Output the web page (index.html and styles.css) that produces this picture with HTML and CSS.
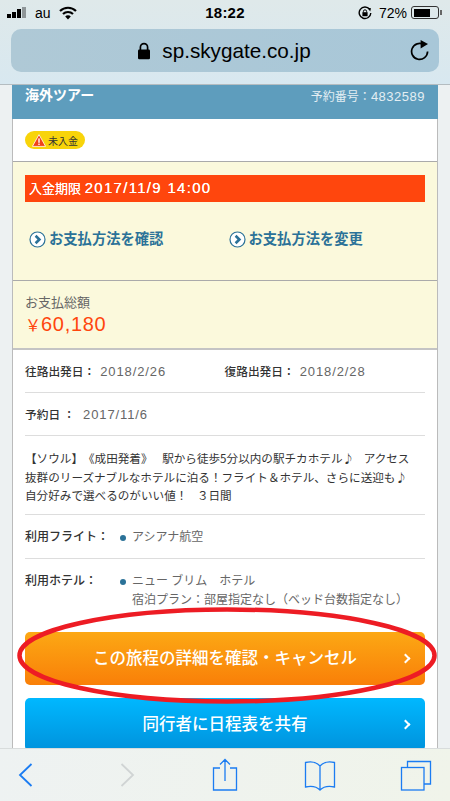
FILE: index.html
```html
<!DOCTYPE html>
<html lang="ja">
<head>
    <meta charset="UTF-8">
    <meta name="viewport" content="width=device-width, initial-scale=1.0">
    <title>sp.skygate.co.jp</title>
    <link rel="stylesheet" href="styles.css">
</head>
<body>
    <div class="phone">
        <header class="chrome">
            <div class="status-bar">
                <div class="status-left">
                    <span class="signal"><i></i><i></i><i></i><i></i></span>
                    <span class="carrier">au</span>
                    <svg class="wifi" width="18" height="14" viewBox="0 0 18 14">
                        <path d="M1 5 A11.5 11.5 0 0 1 17 5" fill="none" stroke="#000" stroke-width="2.2"/>
                        <path d="M4 8 A7.2 7.2 0 0 1 14 8" fill="none" stroke="#000" stroke-width="2.2"/>
                        <path d="M6.2 10.6 A3.8 3.8 0 0 1 11.8 10.6 L9 13.6 Z" fill="#000"/>
                    </svg>
                </div>
                <div class="clock">18:22</div>
                <div class="status-right">
                    <svg class="lock-rotate" width="14" height="14" viewBox="0 0 14 14">
                        <path d="M11.6 3.2 A5.8 5.8 0 1 0 12.8 7" fill="none" stroke="#000" stroke-width="1.4"/>
                        <path d="M9.6 1.8 L13 2.2 L12.2 5.4 Z" fill="#000"/>
                        <rect x="4.4" y="6.2" width="5.2" height="4" fill="#000"/>
                        <path d="M5.4 6.4 V5.4 A1.6 1.6 0 0 1 8.6 5.4 V6.4" fill="none" stroke="#000" stroke-width="1"/>
                    </svg>
                    <span class="battery-pct">72%</span>
                    <span class="battery"><span class="battery-fill"></span></span>
                    <span class="battery-cap"></span>
                </div>
            </div>
            <div class="url-bar">
                <svg class="padlock" width="14" height="18" viewBox="0 0 14 18">
                    <path d="M3.4 8 V5.2 A3.6 3.6 0 0 1 10.6 5.2 V8" fill="none" stroke="#000" stroke-width="1.7"/>
                    <rect x="1" y="7.6" width="12" height="9.6" rx="1.2" fill="#000"/>
                </svg>
                <span class="url">sp.skygate.co.jp</span>
                <svg class="reload" width="20" height="22" viewBox="0 0 20 22">
                    <path d="M14.4 5.6 A8 8 0 1 0 18.2 12.6" transform="translate(-0.6 0)" fill="none" stroke="#000" stroke-width="1.7"/>
                    <path d="M10.6 1 L18 5 L10.6 9.4 Z" fill="#000"/>
                </svg>
            </div>
        </header>

        <main class="page">
            <div class="card">
                <div class="card-head">
                    <span class="tour-type">海外ツアー</span>
                    <span class="booking-no">予約番号：<span class="booking-num">4832589</span></span>
                </div>
                <div class="badge-row">
                    <span class="badge">
                        <svg width="14" height="13" viewBox="0 0 14 13">
                            <path d="M7 .6 L13.6 12.4 H.4 Z" fill="#f0421a" stroke="#fff" stroke-width=".8"/>
                            <rect x="6.3" y="4.4" width="1.4" height="4.4" fill="#fff"/>
                            <rect x="6.3" y="9.6" width="1.4" height="1.4" fill="#fff"/>
                        </svg>
                        未入金
                    </span>
                </div>
                <section class="pay-box">
                    <div class="deadline">入金期限 <span class="deadline-time">2017/11/9 14:00</span></div>
                    <div class="pay-links">
                        <a class="pay-link">
                            <svg width="17" height="17" viewBox="0 0 17 17">
                                <circle cx="8.5" cy="8.5" r="7.5" fill="#fff" stroke="#2b7298" stroke-width="1.2"/>
                                <path d="M6.6 4.8 L10.4 8.5 L6.6 12.2" fill="none" stroke="#2b7298" stroke-width="2.6"/>
                            </svg>
                            お支払方法を確認
                        </a>
                        <a class="pay-link">
                            <svg width="17" height="17" viewBox="0 0 17 17">
                                <circle cx="8.5" cy="8.5" r="7.5" fill="#fff" stroke="#2b7298" stroke-width="1.2"/>
                                <path d="M6.6 4.8 L10.4 8.5 L6.6 12.2" fill="none" stroke="#2b7298" stroke-width="2.6"/>
                            </svg>
                            お支払方法を変更
                        </a>
                    </div>
                </section>
                <section class="total-box">
                    <div class="total-label">お支払総額</div>
                    <div class="total-price"><span class="yen">￥</span>60,180</div>
                </section>
                <section class="details">
                    <div class="row row-dates">
                        <div><b>往路出発日：</b><span class="val">2018/2/26</span></div>
                        <div><b>復路出発日：</b><span class="val">2018/2/28</span></div>
                    </div>
                    <div class="row row-booked"><b>予約日 ：</b><span class="val">2017/11/6</span></div>
                    <p class="row tour-name">【ソウル】《成田発着》 駅から徒歩5分以内の駅チカホテル♪ アクセス抜群のリーズナブルなホテルに泊る！フライト＆ホテル、さらに送迎も♪ 自分好みで選べるのがいい値！ ３日間</p>
                    <div class="row row-info">
                        <b class="info-label">利用フライト：</b>
                        <ul class="info-list"><li>アシアナ航空</li></ul>
                    </div>
                    <div class="row row-info row-hotel">
                        <b class="info-label">利用ホテル：</b>
                        <ul class="info-list"><li>ニュー ブリム　ホテル<br>宿泊プラン：部屋指定なし（ベッド台数指定なし）</li></ul>
                    </div>
                    <a class="btn btn-orange">この旅程の詳細を確認・キャンセル<span class="chev"></span></a>
                    <a class="btn btn-blue">同行者に日程表を共有<span class="chev"></span></a>
                </section>
            </div>
            <svg class="annotation" width="450" height="104" viewBox="0 0 450 104">
                <ellipse cx="227" cy="52.500" rx="207.500" ry="46" fill="none" stroke="#ed1c24" stroke-width="4.500"/>
            </svg>
        </main>

        <footer class="toolbar">
            <svg width="32" height="34" viewBox="0 0 32 34"><path d="M21.500 6 L10 17 L21.500 28" fill="none" stroke="#1b7cf2" stroke-width="1.800"/></svg>
            <svg width="32" height="34" viewBox="0 0 32 34"><path d="M10.500 6 L22 17 L10.500 28" fill="none" stroke="#d0d4d4" stroke-width="1.800"/></svg>
            <svg width="32" height="34" viewBox="0 0 32 34">
                <path d="M11 10 H4.500 V32 H27.500 V10 H21 M16 23 V2 M11 6.500 L16 1.500 L21 6.500" fill="none" stroke="#1b7cf2" stroke-width="1.300"/>
            </svg>
            <svg width="32" height="34" viewBox="0 0 32 34">
                <path d="M16 8 C12 3.500 6 3.500 1.500 4.500 V29 C6 28 12 28 16 32 C20 28 26 28 30.500 29 V4.500 C26 3.500 20 3.500 16 8 Z M16 8 V32" fill="none" stroke="#1b7cf2" stroke-width="1.300"/>
            </svg>
            <svg width="32" height="34" viewBox="0 0 32 34">
                <path d="M7.500 9 V3.500 H30.500 V26 H24" fill="none" stroke="#1b7cf2" stroke-width="1.300"/>
                <rect x="1.500" y="9.500" width="22.500" height="22.500" fill="none" stroke="#1b7cf2" stroke-width="1.300"/>
            </svg>
        </footer>
    </div>
</body>
</html>
```

FILE: styles.css
```css
* {
    box-sizing: border-box;
}
body {
    margin: 0;
    font-family: "Liberation Sans", "Noto Sans CJK JP", sans-serif;
    color: #333;
}
.phone {
    display: flex;
    flex-direction: column;
    width: 450px;
    height: 801px;
    overflow: hidden;
    background: #edf1f2;
}

/* browser chrome */
.chrome {
    flex: none;
    height: 85px;
    padding: 0 11px;
    background: linear-gradient(#dfe9ea, #d8e8f0);
    border-bottom: 1px solid #b4bcc0;
}
.status-bar {
    display: flex;
    align-items: center;
    justify-content: space-between;
    height: 25px;
    margin: 0 -4px;
    color: #000;
}
.status-left,
.status-right {
    display: flex;
    align-items: center;
    width: 145px;
}
.status-right {
    justify-content: flex-end;
}
.signal {
    display: flex;
    align-items: flex-end;
    gap: 1px;
    height: 11px;
}
.signal i {
    width: 4px;
    background: #000;
}
.signal i:nth-child(1) { height: 4px; }
.signal i:nth-child(2) { height: 6px; }
.signal i:nth-child(3) { height: 9px; }
.signal i:nth-child(4) { height: 11px; background: #8f9698; }
.carrier {
    margin-left: 9px;
    font-size: 14px;
}
.wifi {
    margin-left: 8px;
}
.clock {
    font-size: 15px;
    font-weight: bold;
    letter-spacing: 0.2px;
}
.lock-rotate {
    margin-right: 7px;
}
.battery-pct {
    margin-right: 4px;
    font-size: 14px;
}
.battery {
    width: 28px;
    height: 13px;
    padding: 1.500px;
    border: 1px solid #333;
    border-radius: 3px;
}
.battery-fill {
    display: block;
    width: 72%;
    height: 100%;
    background: #000;
}
.battery-cap {
    width: 2px;
    height: 5px;
    margin: 0 1px 0 1px;
    background: #666;
}
.url-bar {
    position: relative;
    display: flex;
    align-items: center;
    justify-content: center;
    gap: 11px;
    height: 43px;
    margin-top: 4px;
    padding-right: 2px;
    background: linear-gradient(90deg, #afc9d6, #a8c7d8);
    border-radius: 10px;
    color: #000;
}
.url {
    font-size: 20.700px;
}
.reload {
    position: absolute;
    right: 9px;
    top: 10px;
}

/* page content */
.page {
    position: relative;
    flex: 1;
    min-height: 0;
    overflow: hidden;
    padding: 0 12px;
}
.card {
    background: #fff;
    border: solid #bbb;
    border-width: 0 1px;
}
.card-head {
    display: flex;
    justify-content: space-between;
    height: 34px;
    margin: 0 -1px;
    padding: 2px 13px 0 13px;
    background: #5e9dbd;
    color: #fff;
}
.tour-type {
    font-size: 14px;
    font-weight: bold;
    line-height: 17px;
}
.booking-no {
    font-size: 12px;
    line-height: 20px;
    color: #e3eef3;
}
.booking-num {
    font-size: 13px;
    letter-spacing: 0.500px;
}
.badge-row {
    height: 42px;
    padding: 12px 12px 0;
}
.badge {
    display: inline-flex;
    align-items: center;
    gap: 2px;
    width: 60px;
    height: 18px;
    padding-left: 7px;
    background: #f8d40a;
    border-radius: 9px;
    font-size: 10px;
    color: #333;
}
.pay-box {
    height: 120px;
    padding: 13px 12px 0;
    background: #fbf9dc;
    border-top: 1px solid #aaa;
    border-bottom: 1px solid #aaa;
}
.deadline {
    height: 27px;
    padding-left: 4px;
    background: #ff460d;
    font-size: 13px;
    line-height: 26px;
    color: #fff;
    text-shadow: 0 0 0.600px #fff;
}
.deadline-time {
    font-size: 15px;
    letter-spacing: 1.300px;
}
.pay-links {
    display: grid;
    grid-template-columns: 199.500px 1fr;
    padding: 28px 0 0 4px;
}
.pay-link {
    display: flex;
    align-items: center;
    gap: 3px;
    font-size: 14.300px;
    font-weight: bold;
    line-height: 18px;
    color: #2b7298;
}
.total-box {
    height: 69px;
    padding: 14px 12px 0;
    background: #fbf9dc;
    border-bottom: 2px solid #c4c4c4;
}
.total-label {
    font-size: 13px;
    line-height: 16px;
    color: #666;
}
.total-price {
    margin-top: 2px;
    font-size: 20px;
    line-height: 22px;
    letter-spacing: 0.700px;
    color: #ff460d;
}
.yen {
    font-size: 16px;
    letter-spacing: 0;
}
.details {
    padding: 0 12px;
}
.row {
    margin: 0;
    border-bottom: 1px solid #ddd;
    font-size: 11.700px;
    color: #666;
}
.row b {
    font-weight: 500;
    color: #333;
}
.val {
    margin-left: 5px;
    font-size: 13px;
    letter-spacing: 0.900px;
}
.row-dates {
    display: grid;
    grid-template-columns: 199.500px 1fr;
    height: 43px;
    padding-top: 13px;
    line-height: 18px;
}
.row-booked {
    height: 43px;
    padding-top: 13px;
    line-height: 18px;
}
.row-booked .val {
    margin-left: 8px;
}
.tour-name {
    height: 79px;
    padding: 13px 5px 0 0;
    font-family: "Noto Sans CJK JP", sans-serif;
    font-size: 11.600px;
    line-height: 18.500px;
    word-spacing: 7px;
    text-spacing-trim: space-all;
    color: #333;
}
.row-info {
    display: grid;
    grid-template-columns: 95px 1fr;
    height: 44px;
    padding-top: 13px;
    font-size: 12px;
    line-height: 18px;
}
.row-hotel {
    height: 73px;
    border-bottom: 0;
    line-height: 19px;
}
.info-list {
    margin: 0;
    padding: 0 0 0 12px;
    list-style: none;
}
.info-list li {
    position: relative;
}
.info-list li::before {
    content: "";
    position: absolute;
    left: -12px;
    top: 7px;
    width: 6px;
    height: 6px;
    border-radius: 50%;
    background: #2b7298;
}
.btn {
    position: relative;
    display: block;
    height: 53px;
    border-radius: 5px;
    font-size: 16.500px;
    font-weight: 500;
    line-height: 53px;
    text-align: center;
    color: #fff;
}
.btn-orange {
    background: linear-gradient(#fca814, #f97f08);
}
.btn-blue {
    margin-top: 13px;
    background: linear-gradient(#00b8ff, #0092dc);
}
.chev {
    position: absolute;
    right: 16px;
    top: 23px;
    width: 7px;
    height: 7px;
    border: solid #fff;
    border-width: 2px 2px 0 0;
    transform: rotate(45deg);
}
.annotation {
    position: absolute;
    left: 0;
    top: 518px;
}

/* bottom toolbar */
.toolbar {
    flex: none;
    display: grid;
    grid-template-columns: 101px 98px 95px 96px 32px;
    align-items: center;
    height: 53px;
    padding-left: 10px;
    background: linear-gradient(100deg, #eef2f2, #f0f4ea);
    border-top: 1px solid #d8dcdc;
}
```
